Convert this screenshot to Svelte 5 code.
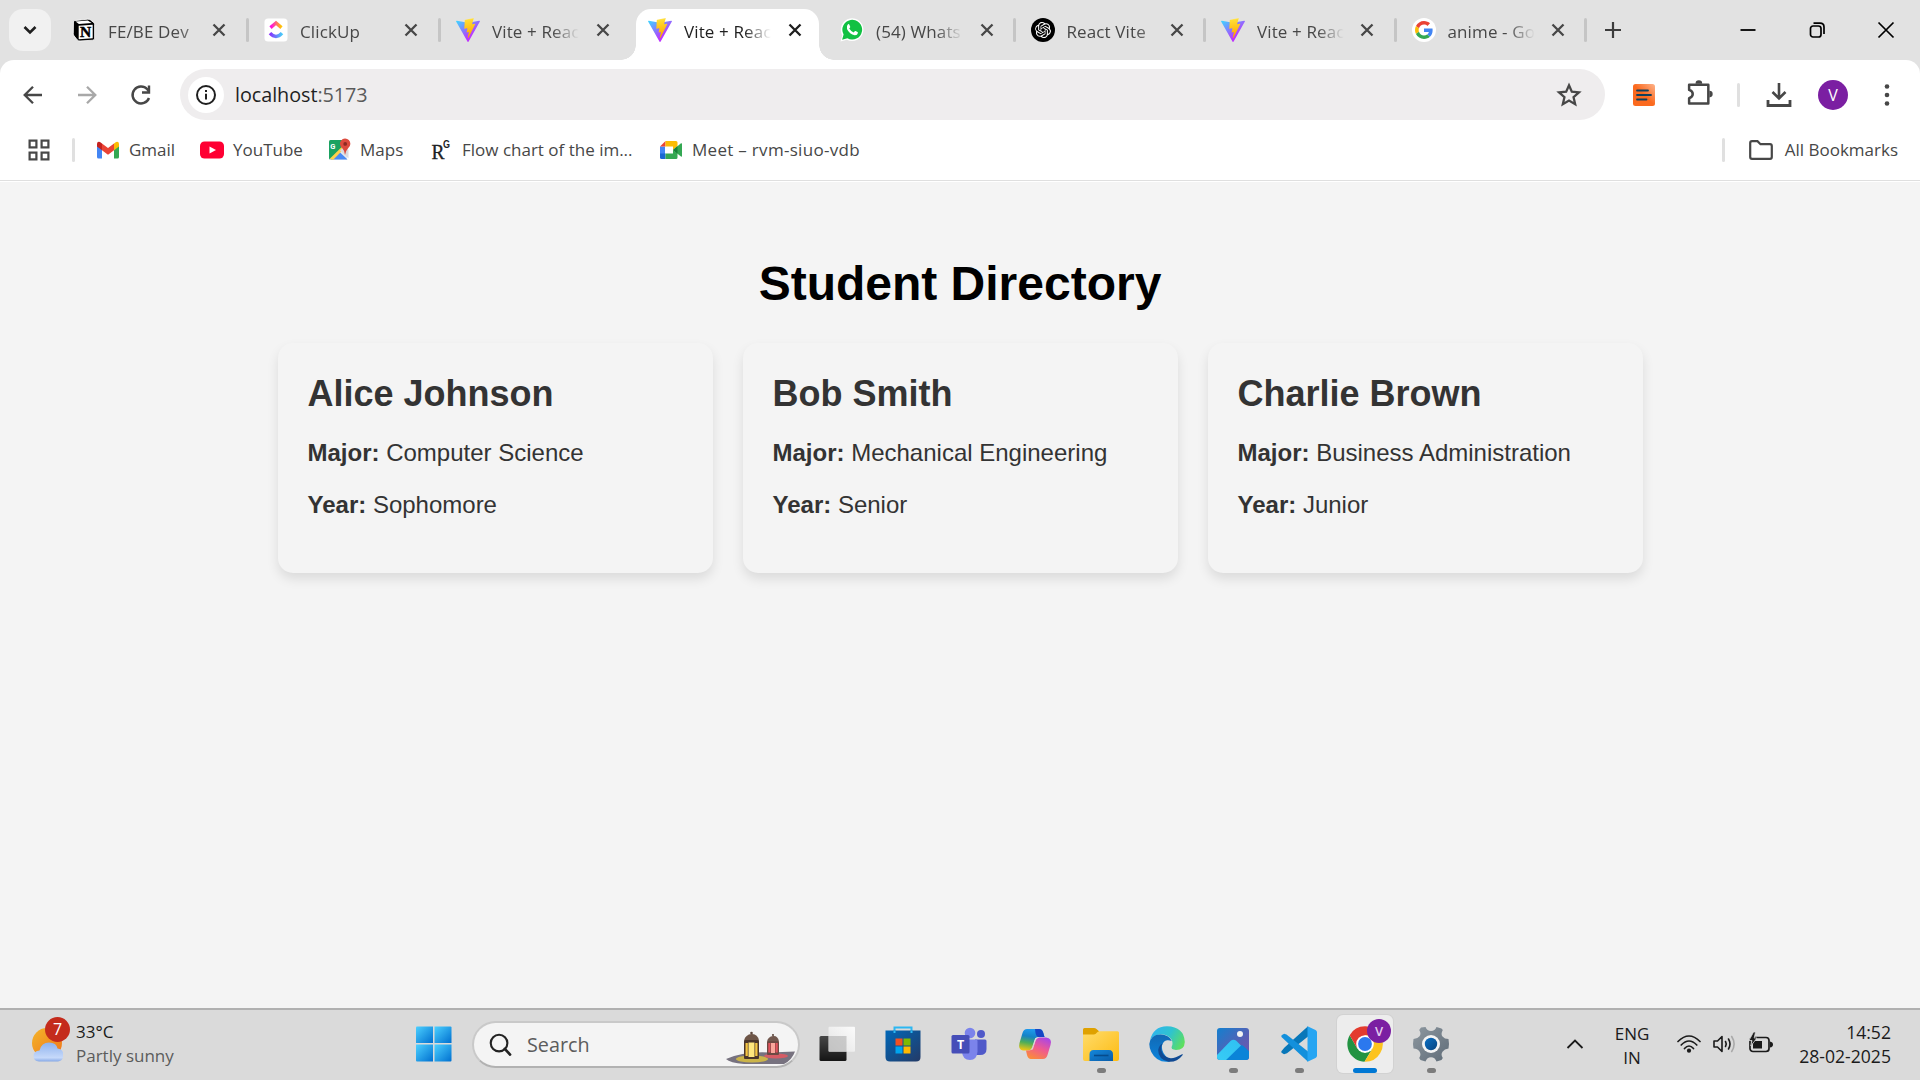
<script>
  const tabs = [
    { icon: 'notion', title: 'FE/BE Dev' },
    { icon: 'clickup', title: 'ClickUp' },
    { icon: 'vite', title: 'Vite + Reac' },
    { icon: 'vite', title: 'Vite + Reac', active: true },
    { icon: 'whatsapp', title: '(54) Whats' },
    { icon: 'openai', title: 'React Vite' },
    { icon: 'vite', title: 'Vite + Reac' },
    { icon: 'google', title: 'anime - Go' }
  ];

  const bookmarks = [
    { icon: 'gmail', label: 'Gmail', width: 103 },
    { icon: 'youtube', label: 'YouTube', width: 127 },
    { icon: 'maps', label: 'Maps', width: 102 },
    { icon: 'rg', label: 'Flow chart of the im...', width: 230 },
    { icon: 'meet', label: 'Meet – rvm-siuo-vdb', width: 210 }
  ];

  const students = [
    { name: 'Alice Johnson', major: 'Computer Science', year: 'Sophomore' },
    { name: 'Bob Smith', major: 'Mechanical Engineering', year: 'Senior' },
    { name: 'Charlie Brown', major: 'Business Administration', year: 'Junior' }
  ];

  const apps = [
    { icon: 'taskview' },
    { icon: 'store' },
    { icon: 'teams' },
    { icon: 'copilot' },
    { icon: 'explorer', running: true },
    { icon: 'edge' },
    { icon: 'photos', running: true },
    { icon: 'vscode', running: true },
    { icon: 'chrome', focused: true },
    { icon: 'settings', running: true }
  ];
</script>

{#snippet favicon(name)}
  {#if name === 'notion'}
    <svg class="fav" viewBox="0 0 24 24">
      <path d="M1.5 2.8 15.5 1.2Q17.5 1 18.6 2L21.6 4.4Q22.6 5.2 22.6 6.6V20.2Q22.6 22 20.8 22.2L8 23Q6.200 23.100 5.200 21.800L2 17.800Q1.300 16.900 1.300 15.600Z" fill="#000" stroke="#fff" stroke-width=".8" />
      <path d="M3.600 3.600 15.700 2.600 19.600 5.100 6.900 6Z" fill="#fff" />
      <path d="M6.700 7.700 20.700 6.800V20.300L6.700 21.200Z" fill="#fff" />
      <text x="13.700" y="19.300" text-anchor="middle" font-family="Liberation Serif, serif" font-weight="700" font-size="15.500" stroke="#000" stroke-width=".5">N</text>
    </svg>
  {:else if name === 'clickup'}
    <svg class="fav" viewBox="0 0 24 24">
      <rect x=".5" y=".5" width="23" height="23" rx="3.500" fill="#fff" />
      <path d="M6.500 9.600 12 5 17.500 9.600" fill="none" stroke="url(#cuTop)" stroke-width="3.400" />
      <path d="M6 15.200Q12 21.800 18 15.200" fill="none" stroke="url(#cuBottom)" stroke-width="3.400" />
    </svg>
  {:else if name === 'vite'}
    <svg class="fav" viewBox="0 0 256 257">
      <path fill="url(#viteA)" d="M255.153 37.938L134.897 252.976c-2.483 4.440-8.862 4.466-11.382.048L.875 37.958c-2.746-4.814 1.371-10.646 6.827-9.670l120.385 21.517a6.537 6.537 0 0 0 2.322-.004l117.867-21.483c5.438-.991 9.574 4.796 6.877 9.620Z" />
      <path fill="url(#viteB)" d="M185.432.063L96.440 17.501a3.268 3.268 0 0 0-2.634 3.014l-5.474 92.456a3.268 3.268 0 0 0 3.997 3.378l24.777-5.718c2.318-.535 4.413 1.507 3.936 3.838l-7.361 36.047c-.495 2.426 1.782 4.500 4.151 3.780l15.304-4.649c2.372-.720 4.652 1.360 4.150 3.788l-11.698 56.621c-.732 3.542 3.979 5.473 5.943 2.437l1.313-2.028l72.516-144.720c1.215-2.423-.880-5.186-3.540-4.672l-25.505 4.922c-2.396.462-4.435-1.770-3.759-4.114l16.646-57.705c.677-2.350-1.370-4.583-3.769-4.113Z" />
    </svg>
  {:else if name === 'whatsapp'}
    <svg class="fav" viewBox="0 0 24 24">
      <path d="M.5 23.500 2.300 17.300A11.300 11.300 0 1 1 6.900 21.700Z" fill="#fff" />
      <path d="M2.100 21.800 3.600 16.500A9.900 9.900 0 1 1 7.400 20.300Z" fill="#12c143" />
      <path d="M8 6.300Q8.900 5.700 9.400 6.800L10.200 8.700Q10.400 9.200 9.900 9.800L9.200 10.600Q10.800 13.400 13.700 14.500L14.700 13.300Q15.100 12.900 15.600 13.100L17.500 14.100Q18.100 14.400 17.900 15.100Q17.300 17.500 14.700 17.300Q9.600 16.500 7 11Q6 8.300 8 6.300Z" fill="#fff" />
    </svg>
  {:else if name === 'openai'}
    <svg class="fav" viewBox="0 0 24 24">
      <circle cx="12" cy="12" r="12" />
      <path transform="translate(4 4) scale(.667)" fill="#fff" d="M22.2819 9.8211a5.9847 5.9847 0 0 0-.5157-4.9108 6.0462 6.0462 0 0 0-6.5098-2.9A6.0651 6.0651 0 0 0 4.9807 4.1818a5.9847 5.9847 0 0 0-3.9977 2.9 6.0462 6.0462 0 0 0 .7427 7.0966 5.98 5.98 0 0 0 .511 4.9107 6.051 6.051 0 0 0 6.5146 2.9001A5.9847 5.9847 0 0 0 13.2599 24a6.0557 6.0557 0 0 0 5.7718-4.2058 5.9894 5.9894 0 0 0 3.9977-2.9001 6.0557 6.0557 0 0 0-.7475-7.0729zm-9.022 12.6081a4.4755 4.4755 0 0 1-2.8764-1.0408l.1419-.0804 4.7783-2.7582a.7948.7948 0 0 0 .3927-.6813v-6.7369l2.02 1.1686a.071.071 0 0 1 .038.052v5.5826a4.504 4.504 0 0 1-4.4945 4.4944zm-9.6607-4.1254a4.4708 4.4708 0 0 1-.5346-3.0137l.142.0852 4.783 2.7582a.7712.7712 0 0 0 .7806 0l5.8428-3.3685v2.3324a.0804.0804 0 0 1-.0332.0615L9.74 19.9502a4.4992 4.4992 0 0 1-6.1408-1.6464zM2.3408 7.8956a4.485 4.485 0 0 1 2.3655-1.9728V11.6a.7664.7664 0 0 0 .3879.6765l5.8144 3.3543-2.0201 1.1685a.0757.0757 0 0 1-.071 0l-4.8303-2.7865A4.504 4.504 0 0 1 2.3408 7.872zm16.5963 3.8558L13.1038 8.364 15.1192 7.2a.0757.0757 0 0 1 .071 0l4.8303 2.7913a4.4944 4.4944 0 0 1-.6765 8.1042v-5.6772a.79.79 0 0 0-.407-.667zm2.0107-3.0231l-.142-.0852-4.7735-2.7818a.7759.7759 0 0 0-.7854 0L9.409 9.2297V6.8974a.0662.0662 0 0 1 .0284-.0615l4.8303-2.7866a4.4992 4.4992 0 0 1 6.6802 4.66zM8.3065 12.863l-2.02-1.1638a.0804.0804 0 0 1-.038-.0567V6.0742a4.4992 4.4992 0 0 1 7.3757-3.4537l-.142.0805L8.704 5.459a.7948.7948 0 0 0-.3927.6813zm1.0976-2.3654l2.602-1.4998 2.6069 1.4998v2.9994l-2.5974 1.4997-2.6067-1.4997Z" />
    </svg>
  {:else if name === 'google'}
    <svg class="fav" viewBox="-8 -8 64 64">
      <circle cx="24" cy="24" r="32" fill="#fff" />
      <path fill="#EA4335" d="M24 9.500c3.540 0 6.710 1.220 9.210 3.600l6.850-6.850C35.900 2.380 30.470 0 24 0 14.620 0 6.510 5.380 2.560 13.220l7.980 6.190C12.430 13.720 17.740 9.500 24 9.500z" />
      <path fill="#4285F4" d="M46.980 24.550c0-1.570-.150-3.090-.380-4.550H24v9.020h12.940c-.580 2.960-2.260 5.480-4.780 7.180l7.730 6c4.510-4.180 7.090-10.360 7.090-17.650z" />
      <path fill="#FBBC05" d="M10.530 28.590c-.480-1.450-.760-2.990-.760-4.590s.270-3.140.760-4.590l-7.980-6.190C.920 16.460 0 20.120 0 24c0 3.880.920 7.540 2.560 10.780l7.970-6.190z" />
      <path fill="#34A853" d="M24 48c6.480 0 11.930-2.130 15.890-5.810l-7.730-6c-2.150 1.450-4.920 2.300-8.160 2.300-6.260 0-11.570-4.220-13.470-9.910l-7.980 6.190C6.510 42.620 14.620 48 24 48z" />
    </svg>
  {:else if name === 'gmail'}
    <svg class="fav" viewBox="0 0 24 24">
      <path d="M1 6.500V19Q1 20.500 2.500 20.500H6V9.500Z" fill="#4285f4" />
      <path d="M23 6.500V19Q23 20.500 21.500 20.500H18V9.500Z" fill="#34a853" />
      <path d="M18 5.500 20 4.100Q22.800 3 23 6V8.500L18 12.300Z" fill="#fbbc04" />
      <path d="M6 5.500 4 4.100Q1.200 3 1 6V8.500L6 12.300Z" fill="#c5221f" />
      <path d="M6 5.500 12 10 18 5.500V12.300L12 16.800 6 12.300Z" fill="#ea4335" />
    </svg>
  {:else if name === 'youtube'}
    <svg class="fav" viewBox="0 0 24 24">
      <rect y="3.500" width="24" height="17" rx="4.500" fill="#ff0033" />
      <path d="M9.500 8.500 16 12 9.500 15.500Z" fill="#fff" />
    </svg>
  {:else if name === 'maps'}
    <svg class="fav" viewBox="0 0 24 24">
      <path d="M2.500 2H20V22H2.500Z" fill="#e8eaed" />
      <path d="M2 3.500Q2 2 3.500 2H16L17 8 3 21.500Q2 21 2 20Z" fill="#1aa260" />
      <path d="M11.500 13 20.500 21.500H3.500Z" fill="#4a8af4" />
      <path d="M2.800 20.800 16 7.800 17.800 10 6 22Z" fill="#ffd04b" />
      <path d="M13 12.500 21.500 20.500V12L17 9Z" fill="#dadce0" />
      <path d="M18 17Q17.600 12.500 15.200 10A5.200 5.200 0 1 1 21.500 9.700Q18.600 12.700 18 17Z" fill="#dc4b3e" />
      <circle cx="18.200" cy="5.900" r="1.900" fill="#8d2a22" />
      <text x="3.200" y="10.500" font-family="Roboto, sans-serif" font-weight="700" font-size="7.500" fill="#fff">G</text>
    </svg>
  {:else if name === 'rg'}
    <svg class="fav" viewBox="0 0 24 24">
      <text x="2.500" y="21" font-family="Liberation Serif, serif" font-size="20" fill="#202124" stroke="#202124" stroke-width=".3" textLength="13" lengthAdjust="spacingAndGlyphs">R</text>
      <text x="14" y="10" font-family="Liberation Sans, sans-serif" font-size="10.500" font-weight="700" fill="#202124" textLength="7" lengthAdjust="spacingAndGlyphs">G</text>
    </svg>
  {:else if name === 'meet'}
    <svg class="fav" viewBox="0 0 24 24">
      <path d="M1 8.500H6V16H1Z" fill="#4285f4" />
      <path d="M1 8.500 6.500 3V8.500Z" fill="#ea4335" />
      <path d="M6.500 3H17Q18.500 3 18.500 4.500V8L14 12V8.500H6.500Z" fill="#fbbc04" />
      <path d="M1 15.500H6.500V21H2.500Q1 21 1 19.500Z" fill="#1967d2" />
      <path d="M6.500 15.500H14V12L18.500 15.500V19.500Q18.500 21 17 21H6.500Z" fill="#34a853" />
      <path d="M14 12 22 5.300Q23 5 23 6V18Q23 19 22 18.600L18.500 15.800Z" fill="#34a853" />
      <path d="M14 12 18.500 8V15.700Z" fill="#188038" />
    </svg>
  {/if}
{/snippet}

{#snippet appIcon(name)}
  {#if name === 'taskview'}
    <svg class="app" viewBox="0 0 36 36">
      <rect x=".5" y="10" width="27" height="25" rx="1.500" fill="url(#tvDark)" />
      <rect x="9.500" y=".8" width="26.500" height="25" rx="1" fill="url(#tvLight)" />
      <path d="M9.500 10H27.500V25.800H10.500Q9.500 25.800 9.500 24.800Z" fill="#a9a9a9" fill-opacity=".55" />
    </svg>
  {:else if name === 'store'}
    <svg class="app" viewBox="0 0 36 36">
      <path d="M9.500 7V1.500H26.500V7" fill="none" stroke="#2cb7f2" stroke-width="2" />
      <path d="M.5 4.500H35.500V31Q35.500 35.500 31 35.500H5Q.5 35.500 .5 31Z" fill="url(#storeBg)" />
      <path d="M9.500 4.500V7M26.500 4.500V7" stroke="#2cb7f2" stroke-width="2" />
      <path d="M10.500 12.500h7v7h-7z" fill="#f25022" />
      <path d="M18.500 12.500h7v7h-7z" fill="#7fba00" />
      <path d="M10.500 20.500h7v7h-7z" fill="#00a4ef" />
      <path d="M18.500 20.500h7v7h-7z" fill="#ffb900" />
    </svg>
  {:else if name === 'teams'}
    <svg class="app" viewBox="0 0 36 36">
      <circle cx="30" cy="8" r="4" fill="#5059c9" />
      <circle cx="19" cy="7" r="5.300" fill="#7b83eb" />
      <path d="M24 13.500H34Q35.500 13.500 35.500 15V23Q35.500 29 29 29H24Z" fill="#5059c9" />
      <path d="M11 13.500H25Q26.500 13.500 26.500 15V25.500Q26 34 19 34Q11.500 34 11 25.500Z" fill="#7b83eb" />
      <rect x=".5" y="9" width="18" height="18.500" rx="1.500" fill="#464eb8" />
      <text x="9.500" y="22.500" text-anchor="middle" font-family="Open Sans, sans-serif" font-weight="700" font-size="12.500" fill="#fff">T</text>
    </svg>
  {:else if name === 'copilot'}
    <svg class="app" viewBox="0 0 36 36">
      <path d="M10 3H22Q25 3 26 6L27.500 11H21Q18.500 11 17.500 14L15 21.500Q14 24.500 11 24.500H6Q.8 24 2.500 17L5.500 7Q6.700 3 10 3Z" fill="url(#cpA)" />
      <path d="M18 3H22Q25 3 26 6L27.500 11H21.500Q19.500 11 18.500 7Z" fill="#1746c5" />
      <path d="M26 33H14Q11 33 10 29L9 24.500H11.500Q15 24.500 16 21L18.500 14Q19.500 11.500 22.500 11.500H29Q35.500 12 33.500 19L30.500 29Q29.300 33 26 33Z" fill="url(#cpB)" />
      <path d="M18.300 12H21Q19.300 12.500 18.700 14.500L15.800 23.500H13.500Q15.200 23 15.900 21Z" fill="#dadada" />
    </svg>
  {:else if name === 'explorer'}
    <svg class="app" viewBox="0 0 36 36">
      <path d="M0 3.500Q0 2 1.500 2H11Q12.500 2 13.500 3L16 5.200V10H0Z" fill="#dfa100" />
      <path d="M0 8.500H11Q12.500 8.500 14 6.500Q15 5.200 17 5.200H34.500Q36 5.200 36 6.700V33Q36 35 34 35H2Q0 35 0 33Z" fill="url(#feBg)" />
      <path d="M6.500 35V28.500Q6.500 24 10.500 24H26Q30 24 30 28.500V35Z" fill="url(#feBlue)" />
      <path d="M11 29.500H25.500" stroke="#064b8c" stroke-width="1.600" />
    </svg>
  {:else if name === 'edge'}
    <svg class="app" viewBox="0 0 36 36">
      <path d="M1 14.500Q4 .5 18 .3Q35 .8 35.800 16Q35.500 24 27 24Q21.500 23.500 22.500 20.500Q24.500 18 22.500 13.500Q18.500 8 11.500 8.500Q4 9 1 14.500Z" fill="url(#edTop)" />
      <path d="M.3 18Q1.500 8.500 11.500 8.500Q20 8.500 22.800 15Q15 12.500 13 19.500Q12 27 20 33L21 35.500Q8 37.500 2.300 26Q.3 22 .3 18Z" fill="url(#edMid)" />
      <path d="M13.500 17.500Q10.500 23 14 28Q20 36 32.500 28.500Q34.500 27 33.300 29.500Q28 36.500 19.500 35.800Q9 33.500 9.200 24Q10 19 13.500 17.500Z" fill="#114a93" />
      <path d="M14 17.500Q18 12.500 22.500 16.500Q24 19 22.300 21Q21.500 24.500 27.500 25.800Q31 26.300 33.500 25Q25 30.500 18 26.500Q13.500 23 14 17.500Z" fill="#dadada" />
    </svg>
  {:else if name === 'photos'}
    <svg class="app" viewBox="0 0 36 36">
      <clipPath id="phClip"><rect x="2" y="2" width="32" height="32" rx="3" /></clipPath>
      <g clip-path="url(#phClip)">
        <rect x="2" y="2" width="32" height="32" fill="url(#phBg)" />
        <path d="M7 36 25 20Q27 18.500 29 20.500L36 27V36Z" fill="#0a84d8" />
        <path d="M0 31 15.500 15Q18.500 12.500 21.500 15L26 19.500 9 36H0Z" fill="url(#phHill)" />
      </g>
      <circle cx="25" cy="8" r="3" fill="#f3f3f3" />
    </svg>
  {:else if name === 'vscode'}
    <svg class="app" viewBox="0 0 36 36">
      <path d="M27 .3 8.500 17 3.500 21.500 1 24.500Q-.5 26 1 27L3 28.300 6 27.200 27 10.500Z" fill="#0877b9" />
      <path d="M1 11.500Q-.3 10.200 1 9L3.200 7.700 5.500 8.500 27 25.500V35.800L9.500 19.500Z" fill="#1390dc" />
      <path d="M26.500 .2 34.500 4Q36 4.700 36 6.300V29.700Q36 31.300 34.500 32L26.500 35.800Z" fill="#26a5f2" />
    </svg>
  {:else if name === 'chrome'}
    <svg class="app" viewBox="0 0 36 36">
      <path d="M18 18 17.500 35.700A17.700 17.700 0 0 1 2.700 9.200L10.300 22.500 18 27 25.500 22.500 17.500 35.700" fill="#229342" />
      <path d="M18 9.300 33.400 9.300A17.700 17.700 0 0 0 2.700 9.200L10.300 22.500Z" fill="#e33b2e" />
      <path d="M33.400 9.300H18V20L25.500 22.500 17.500 35.700A17.700 17.700 0 0 0 33.400 9.300Z" fill="#fcc31e" />
      <circle cx="18" cy="18" r="8.800" fill="#fff" />
      <circle cx="18" cy="18" r="6.900" fill="#2b78ee" />
    </svg>
  {:else if name === 'settings'}
    <svg class="app" viewBox="0 0 36 36">
      <path d="M8 1.500 12.500 1Q14 5 18 5T23.500 1L28.500 2.500 29.800 4Q27.500 8 29.500 10.500T35.500 13L36 18 35.500 22.500Q31.500 23 29.500 25.800T29.800 32L28.500 34 23.500 35.500Q22 31.200 18 31.200T12.500 35.500L7.500 34 6.200 32Q8.500 28.500 6.500 25.500T.5 22.500L0 18 .5 13Q4.500 13 6.500 10.300T6.200 4Z" fill="url(#gear)" />
      <circle cx="18" cy="18" r="9" fill="#f4f4f4" />
      <circle cx="18" cy="18" r="6.200" fill="url(#gearCore)" />
    </svg>
  {/if}
{/snippet}

<svg class="defs" aria-hidden="true">
  <defs>
    <linearGradient id="viteA" x1="-.828%" x2="57.636%" y1="7.652%" y2="78.411%"><stop offset="0" stop-color="#41D1FF" /><stop offset="1" stop-color="#BD34FE" /></linearGradient>
    <linearGradient id="viteB" x1="43.376%" x2="50.316%" y1="2.242%" y2="89.030%"><stop offset="0" stop-color="#FFEA83" /><stop offset=".083" stop-color="#FFDD35" /><stop offset="1" stop-color="#FFA800" /></linearGradient>
    <linearGradient id="cuTop"><stop offset="0" stop-color="#ff02f0" /><stop offset="1" stop-color="#ffc800" /></linearGradient>
    <linearGradient id="cuBottom"><stop offset="0" stop-color="#8930fd" /><stop offset="1" stop-color="#49ccf9" /></linearGradient>
    <linearGradient id="tvDark" x1="0" y1="0" x2="0" y2="1"><stop offset="0" stop-color="#474747" /><stop offset="1" stop-color="#151515" /></linearGradient>
    <linearGradient id="tvLight" x1="0" y1="1" x2="1" y2="0"><stop offset="0" stop-color="#e3e3e3" /><stop offset="1" stop-color="#fbfbfb" /></linearGradient>
    <linearGradient id="storeBg" x1="0" y1="0" x2="1" y2="1"><stop offset="0" stop-color="#0067b8" /><stop offset="1" stop-color="#243a66" /></linearGradient>
    <linearGradient id="cpA" x1=".5" y1="0" x2=".3" y2="1"><stop offset="0" stop-color="#1f9bf0" /><stop offset=".35" stop-color="#1583c6" /><stop offset=".65" stop-color="#4fae58" /><stop offset="1" stop-color="#f2c512" /></linearGradient>
    <linearGradient id="cpB" x1=".8" y1="0" x2=".3" y2="1"><stop offset="0" stop-color="#a846e8" /><stop offset=".5" stop-color="#ef5a91" /><stop offset="1" stop-color="#fb8a3c" /></linearGradient>
    <linearGradient id="feBg" x1="0" y1="0" x2="1" y2="1"><stop offset="0" stop-color="#ffdc6b" /><stop offset="1" stop-color="#fdbb12" /></linearGradient>
    <linearGradient id="feBlue" x1="0" y1="0" x2="1" y2="1"><stop offset="0" stop-color="#1488dc" /><stop offset="1" stop-color="#0a5ca8" /></linearGradient>
    <linearGradient id="edTop" x1="0" y1=".3" x2="1" y2=".7"><stop offset="0" stop-color="#2fb4ee" /><stop offset=".5" stop-color="#2fc3cf" /><stop offset="1" stop-color="#5fe05a" /></linearGradient>
    <linearGradient id="edMid" x1="0" y1="0" x2="0" y2="1"><stop offset="0" stop-color="#1268b4" /><stop offset="1" stop-color="#0b84dc" /></linearGradient>
    <linearGradient id="phBg" x1="0" y1="0" x2="1" y2="1"><stop offset="0" stop-color="#1280cf" /><stop offset=".6" stop-color="#5a5fb4" /><stop offset="1" stop-color="#7455b0" /></linearGradient>
    <linearGradient id="phHill" x1="0" y1="1" x2="1" y2="0"><stop offset="0" stop-color="#38cdf6" /><stop offset="1" stop-color="#2fc0f2" /></linearGradient>
    <linearGradient id="gear" x1="0" y1="0" x2="1" y2="1"><stop offset="0" stop-color="#8d979f" /><stop offset="1" stop-color="#5f6c78" /></linearGradient>
    <linearGradient id="gearCore" x1="0" y1="0" x2="1" y2="1"><stop offset="0" stop-color="#0b70c4" /><stop offset="1" stop-color="#084480" /></linearGradient>
    <linearGradient id="winA" x1="0" y1="0" x2="1" y2="1"><stop offset="0" stop-color="#4cd0ff" /><stop offset="1" stop-color="#0070d0" /></linearGradient>
    <linearGradient id="sun" x1="0" y1="0" x2="1" y2="1"><stop offset="0" stop-color="#f3b52a" /><stop offset="1" stop-color="#f0741a" /></linearGradient>
    <linearGradient id="cloud" x1="0" y1="0" x2="0" y2="1"><stop offset="0" stop-color="#8db2ee" /><stop offset=".8" stop-color="#c6d9fa" /><stop offset="1" stop-color="#86a9e6" /></linearGradient>
    <linearGradient id="ext" x1="0" y1="1" x2="1" y2="0"><stop offset=".5" stop-color="#fb6a1f" /><stop offset="1" stop-color="#fdb48c" /></linearGradient>
  </defs>
</svg>

<div class="screen">
  <header class="browser">
    <div class="tabstrip">
      <button class="tab-search" aria-label="Search tabs">
        <svg width="20" height="20" viewBox="0 0 20 20"><path d="M4.500 7 10 12.500 15.500 7" fill="none" stroke="#1f1f1f" stroke-width="2.600" /></svg>
      </button>
      <div class="tabs">
        {#each tabs as tab, i}
          <div class="tab" class:active={tab.active} class:divided={!tab.active && !tabs[i + 1]?.active}>
            <div class="tab-body">
              {@render favicon(tab.icon)}
              <span class="tab-title">{tab.title}</span>
              <svg class="tab-close" viewBox="0 0 16 16"><path d="M2.500 2.500 13.500 13.500M13.500 2.500 2.500 13.500" fill="none" stroke="currentColor" stroke-width="2.300" /></svg>
            </div>
          </div>
        {/each}
      </div>
      <svg class="new-tab" viewBox="0 0 18 18"><path d="M9 1V17M1 9H17" stroke="#3c3c3c" stroke-width="2.200" /></svg>
      <div class="window-controls">
        <svg viewBox="0 0 18 18"><path d="M1.500 9H16.500" stroke="#000" stroke-width="1.800" /></svg>
        <svg viewBox="0 0 18 18"><rect x="2.500" y="5" width="10.500" height="11" rx="2.500" fill="none" stroke="#000" stroke-width="1.700" /><path d="M5.500 2.200H12Q16 2.200 16 6V13" fill="none" stroke="#000" stroke-width="1.700" /></svg>
        <svg viewBox="0 0 18 18"><path d="M1.500 1.500 16.500 16.500M16.500 1.500 1.500 16.500" stroke="#000" stroke-width="1.700" /></svg>
      </div>
    </div>

    <div class="toolbar">
      <div class="nav">
        <svg viewBox="0 0 24 24"><path d="M21 12H4M12 3.700 3.700 12 12 20.300" fill="none" stroke="#474747" stroke-width="2.300" /></svg>
        <svg viewBox="0 0 24 24"><path d="M3 12H20M12 3.700 20.300 12 12 20.300" fill="none" stroke="#a8a8a8" stroke-width="2.300" /></svg>
        <svg viewBox="0 0 24 24"><path d="M20 15A8.500 8.500 0 1 1 18.300 6.200L20 8.500" fill="none" stroke="#474747" stroke-width="2.400" /><path d="M20 2.500V9.500H13" fill="none" stroke="#474747" stroke-width="2.400" /></svg>
      </div>
      <div class="omnibox">
        <span class="site-info">
          <svg width="22" height="22" viewBox="0 0 22 22"><circle cx="11" cy="11" r="9" fill="none" stroke="#1f1f1f" stroke-width="2" /><path d="M11 9.700V15.500M11 6V8" stroke="#1f1f1f" stroke-width="2" /></svg>
        </span>
        <span class="url">localhost<span class="port">:5173</span></span>
        <svg class="star" viewBox="0 0 24 24"><path d="M12 3 14.600 9 21.200 9.600 16.200 14 17.700 20.500 12 17.100 6.300 20.500 7.800 14 2.800 9.600 9.400 9Z" fill="none" stroke="#474747" stroke-width="2.100" /></svg>
      </div>
      <div class="actions">
        <svg class="reader" viewBox="0 0 22 22"><rect width="22" height="22" rx="2.500" fill="url(#ext)" /><path d="M4 6.500H15M4 11H18M4 15.500H13.500" stroke="#12405c" stroke-width="1.800" stroke-linecap="round" /></svg>
        <svg class="puzzle" viewBox="0 0 26 26"><path d="M3 5.500H21.500V23.500H3V18.500Q6.500 17.500 6.500 14.500T3 10.500Z" fill="none" stroke="#474747" stroke-width="2.400" stroke-linejoin="round" /><path d="M9.200 4.500A3.200 3.200 0 0 1 15.600 4.500ZM22.500 11.300A3.200 3.200 0 0 1 22.500 17.700Z" fill="#474747" /></svg>
        <span class="rule"></span>
        <svg class="download" viewBox="0 0 26 26"><path d="M13 1V16M6.500 10 13 16.500 19.500 10" fill="none" stroke="#474747" stroke-width="2.600" /><path d="M2 18V23.500H24V18" fill="none" stroke="#474747" stroke-width="2.800" /></svg>
        <span class="avatar">V</span>
        <svg class="kebab" viewBox="0 0 6 24"><g fill="#474747"><circle cx="3" cy="3.500" r="2.300" /><circle cx="3" cy="12" r="2.300" /><circle cx="3" cy="20.500" r="2.300" /></g></svg>
      </div>
    </div>

    <div class="bookmarks">
      <svg class="apps-grid" viewBox="0 0 22 22"><g fill="none" stroke="#474747" stroke-width="2.200"><rect x="1.600" y="1.600" width="6.800" height="6.800" /><rect x="13.600" y="1.600" width="6.800" height="6.800" /><rect x="1.600" y="13.600" width="6.800" height="6.800" /><rect x="13.600" y="13.600" width="6.800" height="6.800" /></g></svg>
      <span class="rule"></span>
      <div class="bookmark-list">
        {#each bookmarks as mark}
          <div class="bookmark" style:width="{mark.width}px">
            {@render favicon(mark.icon)}
            <span>{mark.label}</span>
          </div>
        {/each}
      </div>
      <div class="all-bookmarks">
        <span class="rule"></span>
        <svg viewBox="0 0 24 20"><path d="M1.200 17V3Q1.200 1.200 3 1.200H8.500L11.500 4.200H21Q22.800 4.200 22.800 6V17Q22.800 18.800 21 18.800H3Q1.200 18.800 1.200 17Z" fill="none" stroke="#474747" stroke-width="2.200" /></svg>
        <span>All Bookmarks</span>
      </div>
    </div>
  </header>

  <main class="page">
    <h1>Student Directory</h1>
    <div class="cards">
      {#each students as student}
        <article class="card">
          <h2>{student.name}</h2>
          <p><strong>Major:</strong> {student.major}</p>
          <p><strong>Year:</strong> {student.year}</p>
        </article>
      {/each}
    </div>
  </main>

  <footer class="taskbar">
    <div class="weather">
      <div class="weather-icon">
        <svg width="32" height="36" viewBox="0 0 32 36">
          <circle cx="16" cy="17" r="15" fill="url(#sun)" />
          <path d="M8 35.500Q2.500 35 2.500 30T8.500 24.500Q10.500 16.500 18 16.500T26.500 22.500Q32.300 23 32.300 29T27 35.500Z" fill="url(#cloud)" />
        </svg>
        <span class="weather-badge">7</span>
      </div>
      <div class="weather-text">
        <span class="temp">33°C</span>
        <span class="sky">Partly sunny</span>
      </div>
    </div>

    <svg class="start" viewBox="0 0 36 36"><g fill="url(#winA)"><path d="M0 1.500Q0 .5 1 .5H17V17H0Z" /><path d="M18.500 .5H34.500Q35.500 .5 35.500 1.500V17H18.500Z" /><path d="M0 18.500H17V35.500H1Q0 35.500 0 34.500Z" /><path d="M18.500 18.500H35.500V34.500Q35.500 35.500 34.500 35.500H18.500Z" /></g></svg>

    <div class="search">
      <svg class="lens" viewBox="0 0 24 24"><circle cx="10.500" cy="10.500" r="8.700" fill="none" stroke="#222" stroke-width="2.200" /><path d="M16.500 16.500 22 22.500" stroke="#222" stroke-width="2.800" stroke-linecap="round" /></svg>
      <span>Search</span>
      <svg class="lanterns" viewBox="0 0 70 34">
        <path d="M0 28Q18 20 44 21.500L69 20.500Q66 29 58 33H18Q4 32 0 28Z" fill="#77727f" />
        <ellipse cx="26" cy="28" rx="16" ry="3.500" fill="#cbb449" />
        <ellipse cx="50" cy="25" rx="12" ry="2.500" fill="#d55c65" />
        <circle cx="25.500" cy="2" r="1.300" fill="#5b463c" />
        <path d="M18 9.500Q19.500 3.500 25.500 3T33 9.500Z" fill="#6d5547" />
        <rect x="18" y="9" width="15" height="19" rx="1" fill="#4a352b" />
        <path d="M19.500 12h2.300v13H19.500zM29.200 12h2.300v13h-2.300z" fill="#f4c542" />
        <path d="M22.500 11.500h6v14.500h-6z" fill="#ffe77e" />
        <circle cx="47" cy="4" r="1.100" fill="#5b463c" />
        <path d="M41 10.500Q42 5.500 47 5T53 10.500Z" fill="#71584e" />
        <rect x="41" y="10" width="12" height="14" rx="1" fill="#6b4a43" />
        <path d="M42.300 12h2.200v9.500h-2.200zM49.500 12h2.200v9.500h-2.200z" fill="#e2525c" />
        <path d="M45 12h4v10h-4z" fill="#f9a69b" />
      </svg>
    </div>

    <div class="apps">
      {#each apps as app}
        <div class="app-slot" class:focused={app.focused}>
          {@render appIcon(app.icon)}
          {#if app.focused}<span class="profile-badge">V</span>{/if}
          {#if app.running || app.focused}<span class="indicator"></span>{/if}
        </div>
      {/each}
    </div>

    <div class="tray">
      <svg class="chevron" viewBox="0 0 18 12"><path d="M1.500 10 9 2.500 16.500 10" fill="none" stroke="#1b1b1b" stroke-width="1.800" /></svg>
      <div class="lang"><span>ENG</span><span>IN</span></div>
      <svg class="status" viewBox="0 0 24 24"><g fill="none" stroke="#1b1b1b" stroke-width="1.700" stroke-linecap="round"><path d="M1 9.500Q12 -1.500 23 9.500" /><path d="M4.200 13Q12 5 19.800 13" /><path d="M7.500 16.500Q12 11.500 16.500 16.500" /></g><circle cx="12" cy="18.700" r="2.100" fill="#1b1b1b" /></svg>
      <svg class="status" viewBox="0 0 24 24"><g fill="none" stroke="#1b1b1b" stroke-width="1.600" stroke-linecap="round" stroke-linejoin="round"><path d="M1 9H4.500L9 4.500V19.500L4.500 15H1Z" /><path d="M12.500 9.500Q14 12 12.500 14.500M15.500 7Q18.500 12 15.500 17" /><path d="M18.700 4.500Q23.500 12 18.700 19.500" stroke="#a9a9a9" /></g></svg>
      <svg class="status" viewBox="0 0 24 24"><rect x="1" y="5.500" width="19" height="14" rx="3" fill="none" stroke="#1b1b1b" stroke-width="1.700" /><path d="M21 9.500Q24 10 24 12.500T21 15.500Z" fill="#1b1b1b" /><path d="M4 9H13V16.500H4Z" fill="#1b1b1b" /><path d="M4.500 0 0 8.500H3L1.800 14 8 6H5.200L6.500 0Z" fill="#1b1b1b" stroke="#dadada" stroke-width=".8" /></svg>
      <div class="clock"><span>14:52</span><span>28-02-2025</span></div>
    </div>
  </footer>
</div>

<style>
  :global(body) {
    margin: 0;
    overflow: hidden;
  }
  .screen {
    display: flex;
    flex-direction: column;
    width: 1920px;
    height: 1080px;
    overflow: hidden;
    font-family: 'Open Sans', 'Noto Sans', sans-serif;
    background: #f4f4f4;
  }
  .screen * {
    box-sizing: border-box;
  }
  .screen svg {
    display: block;
    flex: none;
  }
  .defs {
    position: absolute;
    width: 0;
    height: 0;
  }
  .fav {
    width: 24px;
    height: 24px;
  }

  /* Browser chrome */
  .browser {
    flex: none;
    height: 182px;
    background: #e2e2e2;
  }
  .tabstrip {
    display: flex;
    align-items: center;
    height: 60px;
    padding-left: 9px;
  }
  .tab-search {
    display: grid;
    place-items: center;
    width: 42px;
    height: 42px;
    padding: 0;
    border: 0;
    border-radius: 14px;
    background: #f1f1f1;
  }
  .tabs {
    display: flex;
    margin-left: 5px;
  }
  .tab {
    position: relative;
    width: 192px;
    height: 60px;
    padding: 9px 5px 0 4px;
    color: #474747;
  }
  .tab:nth-child(n + 5) {
    width: 190.5px;
  }
  .tab-body {
    display: flex;
    align-items: center;
    height: 51px;
    padding: 0 0 9px 12px;
    gap: 12px;
  }
  .divided::after {
    content: '';
    position: absolute;
    right: -1px;
    top: 18px;
    width: 3px;
    height: 24px;
    border-radius: 2px;
    background: #c5c5c5;
  }
  .active .tab-body {
    position: relative;
    color: #1f1f1f;
    background: #fff;
    border-radius: 15px 15px 0 0;
  }
  .active .tab-body::before,
  .active .tab-body::after {
    content: '';
    position: absolute;
    bottom: 0;
    width: 15px;
    height: 15px;
  }
  .active .tab-body::before {
    left: -15px;
    background: radial-gradient(circle at 0 0, transparent 14.5px, #fff 15px);
  }
  .active .tab-body::after {
    right: -15px;
    background: radial-gradient(circle at 100% 0, transparent 14.5px, #fff 15px);
  }
  .tab-title {
    width: 88px;
    padding-top: 3px;
    white-space: nowrap;
    font-size: 17px;
    line-height: 24px;
    letter-spacing: 0.12px;
    -webkit-mask-image: linear-gradient(90deg, #000 60px, transparent 87px);
    mask-image: linear-gradient(90deg, #000 60px, transparent 87px);
  }
  .tab:first-child .tab-title,
  .tab:nth-child(6) .tab-title {
    -webkit-mask-image: linear-gradient(90deg, #000 66px, #0009 86px);
    mask-image: linear-gradient(90deg, #000 66px, #0009 86px);
  }
  .tab-close {
    width: 16px;
    height: 16px;
    margin-left: 3px;
  }
  .tab:nth-child(n + 6) .tab-close {
    margin-left: 2px;
  }
  .new-tab {
    width: 18px;
    height: 18px;
    margin-left: 18px;
  }
  .window-controls {
    display: flex;
    gap: 51px;
    margin: 0 25px 0 auto;
  }
  .window-controls svg {
    width: 18px;
    height: 18px;
  }

  .toolbar {
    display: flex;
    align-items: center;
    height: 70px;
    padding: 0 0 1px 21px;
    background: #fff;
    border-radius: 14px 14px 0 0;
  }
  .nav {
    display: flex;
    gap: 30px;
    width: 159px;
  }
  .nav svg {
    width: 24px;
    height: 24px;
  }
  .omnibox {
    display: flex;
    align-items: center;
    width: 1425px;
    height: 51px;
    padding: 0 23px 0 8px;
    border-radius: 26px;
    background: #efedee;
  }
  .site-info {
    display: grid;
    place-items: center;
    width: 36px;
    height: 36px;
    border-radius: 50%;
    background: #fff;
  }
  .url {
    margin-left: 11px;
    font-size: 19.8px;
    line-height: 28px;
    letter-spacing: -0.05px;
    color: #1f1f1f;
  }
  .port {
    color: #5a5a5a;
  }
  .star {
    width: 26px;
    height: 26px;
    margin-left: auto;
  }
  .actions {
    display: flex;
    align-items: center;
  }
  .reader {
    width: 22px;
    height: 22px;
    margin-left: 28px;
  }
  .puzzle {
    width: 27px;
    height: 27px;
    margin: 0 0 4px 31px;
  }
  .rule {
    flex: none;
    width: 3px;
    height: 24px;
    border-radius: 2px;
    background: #e0e0e0;
  }
  .actions .rule {
    margin-left: 24px;
  }
  .download {
    width: 26px;
    height: 26px;
    margin-left: 26px;
  }
  .avatar {
    width: 30px;
    height: 30px;
    margin-left: 26px;
    border-radius: 50%;
    background: #7b1fa2;
    color: #fff;
    font-size: 16px;
    line-height: 30px;
    text-align: center;
  }
  .kebab {
    width: 6px;
    height: 24px;
    margin-left: 36px;
  }

  .bookmarks {
    display: flex;
    align-items: center;
    height: 52px;
    padding: 0 22px 12px 28px;
    background: linear-gradient(#fff 50px, #dfdfdf 50px, #dfdfdf 51px, #fff 51px);
    color: #474747;
    font-size: 17px;
    line-height: 24px;
    white-space: nowrap;
  }
  .apps-grid {
    width: 22px;
    height: 22px;
  }
  .bookmarks > .rule {
    margin-left: 22px;
  }
  .bookmark-list {
    display: flex;
    margin-left: 21px;
  }
  .bookmark {
    display: flex;
    align-items: center;
    gap: 9px;
  }
  .bookmark:first-child {
    margin-right: 1px;
  }
  .bookmark:last-child {
    letter-spacing: 0.3px;
  }
  .all-bookmarks {
    display: flex;
    align-items: center;
    margin-left: auto;
  }
  .all-bookmarks svg {
    width: 24px;
    height: 20px;
    margin: 0 12px 0 24px;
  }

  /* Page */
  .page {
    flex: 1;
    padding: 74px 277.5px 0;
    font-family: 'Liberation Sans', Arial, sans-serif;
  }
  h1 {
    margin: 0;
    font-size: 48px;
    line-height: 56px;
    text-align: center;
    color: #000;
  }
  .cards {
    display: grid;
    grid-template-columns: repeat(3, 1fr);
    gap: 30px;
    margin-top: 31px;
  }
  .card {
    height: 230px;
    padding: 30px;
    border-radius: 15px;
    background: #f4f4f4;
    box-shadow: 0 6px 12px rgba(0, 0, 0, 0.1);
    color: #333;
  }
  h2 {
    margin: 0 0 24px;
    font-size: 36px;
    line-height: 42px;
  }
  p {
    margin: 0 0 24px;
    font-size: 24px;
    line-height: 28px;
  }

  /* Taskbar */
  .taskbar {
    display: flex;
    align-items: center;
    flex: none;
    height: 72px;
    padding-bottom: 2px;
    border-top: 2px solid #b0b0b0;
    background: #dadada;
    white-space: nowrap;
  }
  .weather {
    display: flex;
    align-items: center;
    width: 416px;
    padding-left: 31px;
  }
  .weather-icon {
    position: relative;
    width: 32px;
    height: 36px;
  }
  .weather-badge {
    position: absolute;
    left: 14px;
    top: -9px;
    width: 25px;
    height: 25px;
    border-radius: 50%;
    background: #c42b1c;
    color: #fff;
    font-size: 16px;
    line-height: 24px;
    text-align: center;
  }
  .weather-text {
    display: flex;
    flex-direction: column;
    margin-left: 13px;
    font-size: 17px;
    line-height: 24px;
  }
  .temp {
    color: #1b1b1b;
  }
  .sky {
    color: #5c5c5c;
  }
  .start {
    width: 36px;
    height: 36px;
  }
  .search {
    display: flex;
    align-items: center;
    width: 328px;
    height: 47px;
    margin-left: 20px;
    padding-left: 15px;
    border: 2px solid #c9c9c9;
    border-bottom-color: #b2b2b2;
    border-radius: 24px;
    background: #f4f4f4;
    color: #5c5c5c;
    font-size: 19.8px;
  }
  .lens {
    width: 23px;
    height: 23px;
    margin-right: 15px;
  }
  .lanterns {
    width: 70px;
    height: 34px;
    margin: 7px 2px 0 auto;
  }
  .apps {
    display: flex;
    align-items: center;
    margin-left: 4px;
  }
  .app-slot {
    position: relative;
    display: grid;
    place-items: center;
    width: 56px;
    height: 58px;
    margin: 0 5px;
    border-radius: 6px;
  }
  .app {
    width: 36px;
    height: 36px;
  }
  .focused {
    background: #ededed;
    box-shadow: 0 0 0 1px #d2d2d2;
  }
  .profile-badge {
    position: absolute;
    left: 30px;
    top: 4px;
    width: 24px;
    height: 24px;
    border-radius: 50%;
    background: #7b1fa2;
    color: #e3cdee;
    font-size: 13px;
    font-weight: 600;
    line-height: 24px;
    text-align: center;
  }
  .indicator {
    position: absolute;
    left: 23.5px;
    bottom: 0;
    width: 9px;
    height: 5px;
    border-radius: 3px;
    background: #7c7c7c;
  }
  .focused .indicator {
    left: 16px;
    width: 24px;
    background: #0078d4;
  }
  .tray {
    display: flex;
    align-items: center;
    margin: 0 29px 0 auto;
    color: #1b1b1b;
    font-size: 17px;
    line-height: 24px;
  }
  .chevron {
    width: 18px;
    height: 12px;
  }
  .lang,
  .clock {
    display: flex;
    flex-direction: column;
  }
  .lang {
    width: 36px;
    margin: 4px 27px 0 30px;
    text-align: center;
  }
  .status {
    width: 24px;
    height: 24px;
    margin-right: 12px;
  }
  .clock {
    width: 106px;
    text-align: right;
    font-size: 17.6px;
  }
</style>
